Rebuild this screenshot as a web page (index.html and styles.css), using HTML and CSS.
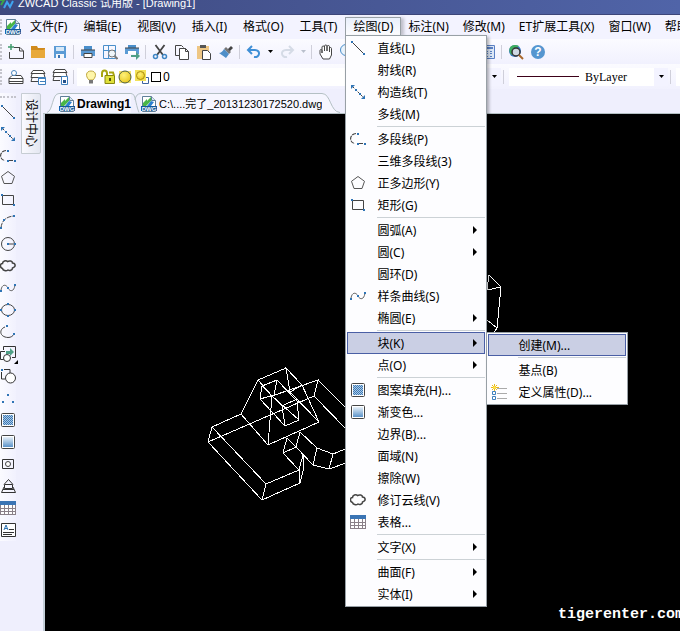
FILE: index.html
```
<!DOCTYPE html>
<html lang="zh-CN">
<head>
    <meta charset="UTF-8">
    <meta name="viewport" content="width=device-width, initial-scale=1.0">
    <title>ZWCAD Classic 试用版 - [Drawing1]</title>
    <link rel="stylesheet" href="styles.css">
</head>
<body>

    <!-- shared icons -->
    <svg class="defs" aria-hidden="true">
        <defs>
            <linearGradient id="g-blue" x1="0" y1="0" x2="0" y2="1">
                <stop offset="0" stop-color="#e8f1f9"/><stop offset="1" stop-color="#5b93c9"/>
            </linearGradient>
            <pattern id="p-check" width="2" height="2" patternUnits="userSpaceOnUse">
                <rect width="2" height="2" fill="#a9cbe8"/><path d="M0 0h1v1H0zM1 1h1v1H1z" fill="#3f78b4"/>
            </pattern>
            <radialGradient id="g-sun" cx=".4" cy=".35" r=".7">
                <stop offset="0" stop-color="#fff27a"/><stop offset="1" stop-color="#e8c61c"/>
            </radialGradient>
        </defs>
        <symbol id="i-dwg" viewBox="0 0 16 16">
            <path d="M1.500.500h9l4 4v11h-13z" fill="#fff" stroke="#5f7f99"/>
            <path d="M10.500.500v4h4" fill="#d8e6f0" stroke="#5f7f99"/>
            <path d="M2 7l4-4v2l4-4v4L5 10H2z" fill="#49b648"/>
            <path d="M6 10l4-5 3 1-3 4z" fill="#2c7fd0"/>
            <rect y="10" width="16" height="5" fill="#14599b"/>
            <text x="8" y="15" text-anchor="middle" class="tiny">DWG</text>
        </symbol>
        <symbol id="i-line" viewBox="0 0 16 16">
            <path d="M2 2l12 12" stroke="#444"/>
            <path d="M1 1h2v2H1zM13 13h2v2h-2z" fill="#2f74b5"/>
        </symbol>
        <symbol id="i-xline" viewBox="0 0 16 16">
            <path d="M2 2l12 12" stroke="#444" stroke-dasharray="3 1"/>
            <path d="M1 1h4L1 5zM15 15h-4l4-4zM5 5h2v2H5zM9 9h2v2H9z" fill="#2f74b5"/>
        </symbol>
        <symbol id="i-pline" viewBox="0 0 16 16">
            <path d="M6 2.500C-1 3-1 12 5 12.500M9 12.500h5" fill="none" stroke="#444" stroke-width="1.2" stroke-dasharray="4 1"/>
            <path d="M7 2h2v2H7zM7 12h2v2H7zM14 12h2v2h-2z" fill="#2f74b5"/>
        </symbol>
        <symbol id="i-polygon" viewBox="0 0 16 16">
            <path d="M8 1.500l6.500 4.800-2.500 7.200H4L1.500 6.300z" fill="none" stroke="#555"/>
        </symbol>
        <symbol id="i-rect" viewBox="0 0 16 16">
            <path d="M2.500 3.500h11v9h-11z" fill="none" stroke="#444"/>
            <path d="M1 2h2v2H1zM13 12h2v2h-2z" fill="#2f74b5"/>
        </symbol>
        <symbol id="i-arc" viewBox="0 0 16 16">
            <path d="M1 14Q2 3 14 2" fill="none" stroke="#444" stroke-dasharray="5 1"/>
            <path d="M0 13h2v2H0zM3 5h2v2H3zM13 1h2v2h-2z" fill="#2f74b5"/>
        </symbol>
        <symbol id="i-circle" viewBox="0 0 16 16">
            <circle cx="8" cy="8" r="6.500" fill="none" stroke="#444"/>
            <path d="M8 8h6" stroke="#444"/><path d="M7 7h2v2H7zM14 7h2v2h-2z" fill="#2f74b5"/>
        </symbol>
        <symbol id="i-cloud" viewBox="0 0 16 16">
            <path d="M2.500 10.500C-.5 9.500 0 5.500 2.500 5.500c0-2.500 3.500-3.500 5-2 2-1.200 5-.5 5 1.500 3.500.5 3.500 4 0 5 0 2.500-3 3-4.500 2-2 1.500-5 .5-5.500-1.500z" fill="none" stroke="#444" stroke-width="1.5"/>
        </symbol>
        <symbol id="i-spline" viewBox="0 0 16 16">
            <path d="M1 10C2 4 6 4 8 8s6 4 7-3" fill="none" stroke="#666"/>
            <path d="M0 10h2v2H0zM7 7h2v2H7zM14 4h2v2h-2z" fill="#2f74b5"/>
        </symbol>
        <symbol id="i-ellipse" viewBox="0 0 16 16">
            <ellipse cx="8" cy="8" rx="6.500" ry="5.500" fill="none" stroke="#444"/>
            <path d="M7 1h2v2H7zM7 13h2v2H7zM0 7h2v2H0zM14 7h2v2h-2z" fill="#2f74b5"/>
        </symbol>
        <symbol id="i-earc" viewBox="0 0 16 16">
            <path d="M5 3C-1 5-1 13 8 13.500c3 0 5-1.500 6-3.500" fill="none" stroke="#444"/>
            <path d="M6 1h2v2H6zM13 9h2v2h-2z" fill="#2f74b5"/>
        </symbol>
        <symbol id="i-insert" viewBox="0 0 16 16">
            <path d="M3.500 4V.500h12v11H12M5 5.500H.5v8H4" fill="none" stroke="#333"/>
            <path d="M6 5h4V2l4 4-4 4V8H6z" fill="#4f9f86"/><circle cx="7" cy="12" r="3.500" fill="#fff" stroke="#333"/>
        </symbol>
        <symbol id="i-block" viewBox="0 0 16 16">
            <path d="M4 1.500h6V5M1.500 4v7H5" fill="none" stroke="#333"/><path d="M1 1h2v2H1z" fill="#2f74b5"/>
            <circle cx="10.500" cy="10" r="5" fill="#fff" stroke="#333"/>
        </symbol>
        <symbol id="i-points" viewBox="0 0 16 16">
            <path d="M7 4h2v2H7zM2 11h2v2H2zM12 11h2v2h-2z" fill="#2f74b5"/>
        </symbol>
        <symbol id="i-hatch" viewBox="0 0 16 16">
            <rect x="1.500" y="1.500" width="13" height="13" rx="1" fill="#fff" stroke="#444"/>
            <rect x="3" y="3" width="10" height="10" fill="url(#p-check)"/>
        </symbol>
        <symbol id="i-gradient" viewBox="0 0 16 16">
            <rect x="1.500" y="1.500" width="13" height="13" rx="1" fill="#fff" stroke="#444"/>
            <rect x="3" y="3" width="10" height="10" fill="url(#g-blue)"/>
        </symbol>
        <symbol id="i-region" viewBox="0 0 16 16">
            <path d="M2.500 3.500h11v9h-11z" fill="none" stroke="#333"/><circle cx="8" cy="8" r="2.500" fill="#fff" stroke="#444"/>
        </symbol>
        <symbol id="i-wipe" viewBox="0 0 16 16">
            <path d="M4 6.500l4.500-5 4.500 5M4.500 6.500h8v4h-8zM4 9l-2.500 5.500h14L13 9M3 11.500h11" fill="none" stroke="#333"/>
        </symbol>
        <symbol id="i-table" viewBox="0 0 16 16">
            <path d="M0 1h16v14H0z" fill="#8a8088"/><path d="M0 1h16v4H0z" fill="#3a74b4"/>
            <path d="M1 5h3v3H1zM5 5h3v3H5zM9 5h3v3H9zM13 5h2v3h-2zM1 9h3v2H1zM5 9h3v2H5zM9 9h3v2H9zM13 9h2v2h-2zM1 12h3v2H1zM5 12h3v2H5zM9 12h3v2H9zM13 12h2v2h-2z" fill="#fff"/>
        </symbol>
        <symbol id="i-mtext" viewBox="0 0 16 16">
            <path d="M1.500 1.500h14v13h-14z" fill="#fff" stroke="#333"/>
            <path d="M4 8l2-5 2 5M4.500 6.500h3" fill="none" stroke="#2f74b5"/><path d="M9 7.500h5M3 10.500h11M3 12.500h9" stroke="#333"/>
        </symbol>
        <symbol id="i-attdef" viewBox="0 0 16 16">
            <path d="M3.500 0v8M0 3.500h8M1 1l5 5M6 1L1 6" stroke="#e9b91c"/><circle cx="3.500" cy="3.500" r="1.500" fill="#ffe34a"/>
            <path d="M1.500 7.500h3v3h-3zM1.500 12.500h3v3h-3z" fill="#fff" stroke="#3f80bd"/>
            <path d="M6 4.500h10M6 9.500h10M6 14.500h10" stroke="#aaa"/>
        </symbol>
        <symbol id="i-arrow" viewBox="0 0 4 8"><path d="M0 0l4 4-4 4z" fill="#000"/></symbol>
        <symbol id="i-down" viewBox="0 0 5 3"><path d="M0 0h5L2.500 3z" fill="currentColor"/></symbol>
    </svg>

    <header class="titlebar">
        <svg class="icon" viewBox="0 0 16 16"><path d="M0 4h4l-3 5" fill="none" stroke="#3da54a" stroke-width="2"/><path d="M4 12l3-6 3 5 3-6" fill="none" stroke="#3fa4f0" stroke-width="2"/></svg>
        <span>ZWCAD Classic 试用版 - [Drawing1]</span>
    </header>

    <nav class="menubar">
        <span class="grip"></span>
        <svg class="icon logo"><use href="#i-dwg"/></svg>
        <ul class="menus">
            <li><button>文件(F)</button></li>
            <li><button>编辑(E)</button></li>
            <li><button>视图(V)</button></li>
            <li><button>插入(I)</button></li>
            <li><button>格式(O)</button></li>
            <li><button>工具(T)</button></li>
            <li class="open">
                <button aria-expanded="true">绘图(D)</button>
                <ul class="dropdown">
                    <li><button><svg class="icon"><use href="#i-line"/></svg><span>直线(L)</span></button></li>
                    <li><button><i class="icon"></i><span>射线(R)</span></button></li>
                    <li><button><svg class="icon"><use href="#i-xline"/></svg><span>构造线(T)</span></button></li>
                    <li><button><i class="icon"></i><span>多线(M)</span></button></li>
                    <li class="line"></li>
                    <li><button><svg class="icon"><use href="#i-pline"/></svg><span>多段线(P)</span></button></li>
                    <li><button><i class="icon"></i><span>三维多段线(3)</span></button></li>
                    <li><button><svg class="icon"><use href="#i-polygon"/></svg><span>正多边形(Y)</span></button></li>
                    <li><button><svg class="icon"><use href="#i-rect"/></svg><span>矩形(G)</span></button></li>
                    <li class="line"></li>
                    <li><button><i class="icon"></i><span>圆弧(A)</span><svg class="more"><use href="#i-arrow"/></svg></button></li>
                    <li><button><i class="icon"></i><span>圆(C)</span><svg class="more"><use href="#i-arrow"/></svg></button></li>
                    <li><button><i class="icon"></i><span>圆环(D)</span></button></li>
                    <li><button><svg class="icon"><use href="#i-spline"/></svg><span>样条曲线(S)</span></button></li>
                    <li><button><i class="icon"></i><span>椭圆(E)</span><svg class="more"><use href="#i-arrow"/></svg></button></li>
                    <li class="line"></li>
                    <li>
                        <button class="active" aria-expanded="true"><i class="icon"></i><span>块(K)</span><svg class="more"><use href="#i-arrow"/></svg></button>
                        <ul class="dropdown submenu">
                            <li><button class="active"><i class="icon"></i><span>创建(M)...</span></button></li>
                            <li class="line"></li>
                            <li><button><i class="icon"></i><span>基点(B)</span></button></li>
                            <li><button><svg class="icon"><use href="#i-attdef"/></svg><span>定义属性(D)...</span></button></li>
                        </ul>
                    </li>
                    <li><button><i class="icon"></i><span>点(O)</span><svg class="more"><use href="#i-arrow"/></svg></button></li>
                    <li class="line"></li>
                    <li><button><svg class="icon"><use href="#i-hatch"/></svg><span>图案填充(H)...</span></button></li>
                    <li><button><svg class="icon"><use href="#i-gradient"/></svg><span>渐变色...</span></button></li>
                    <li><button><i class="icon"></i><span>边界(B)...</span></button></li>
                    <li><button><i class="icon"></i><span>面域(N)</span></button></li>
                    <li><button><i class="icon"></i><span>擦除(W)</span></button></li>
                    <li><button><svg class="icon"><use href="#i-cloud"/></svg><span>修订云线(V)</span></button></li>
                    <li><button><svg class="icon"><use href="#i-table"/></svg><span>表格...</span></button></li>
                    <li class="line"></li>
                    <li><button><i class="icon"></i><span>文字(X)</span><svg class="more"><use href="#i-arrow"/></svg></button></li>
                    <li class="line"></li>
                    <li><button><i class="icon"></i><span>曲面(F)</span><svg class="more"><use href="#i-arrow"/></svg></button></li>
                    <li><button><i class="icon"></i><span>实体(I)</span><svg class="more"><use href="#i-arrow"/></svg></button></li>
                </ul>
            </li>
            <li><button>标注(N)</button></li>
            <li><button>修改(M)</button></li>
            <li><button>ET扩展工具(X)</button></li>
            <li><button>窗口(W)</button></li>
            <li><button>帮助(H)</button></li>
        </ul>
    </nav>

    <div class="toolbar standard">
        <span class="grip"></span>
        <button aria-label="新建"><svg class="icon" viewBox="0 0 16 16"><path d="M6 3.500h6l3.500 3.500v7.500h-14V8" fill="none" stroke="#444"/><path d="M11.500 3.500V7h4" fill="none" stroke="#444"/><path d="M3 0v6M0 3h6" stroke="#3f9a6c" stroke-width="1.500"/></svg></button>
        <button aria-label="打开"><svg class="icon" viewBox="0 0 16 16"><path d="M1 3V2h6l1 2h7v10H1z" fill="#d08a1c"/><path d="M1 6h12l2-1v9H1z" fill="#e8a93a"/></svg></button>
        <button aria-label="保存"><svg class="icon" viewBox="0 0 16 16"><path d="M2 2h12v12H2z" fill="#5b9bd5"/><path d="M4 3h8v4H4z" fill="#d6e8f7"/><path d="M4 10h8v4H4z" fill="#f6f8fb"/><path d="M6 11h2v3H6z" fill="#3a74b4"/></svg></button>
        <span class="sep"></span>
        <button aria-label="打印"><svg class="icon" viewBox="0 0 16 16"><path d="M4 2h8v4H4z" fill="#4a8fcb"/><path d="M1 6h14v6H1z" fill="#5b9bd5"/><path d="M4 9.500h8v4H4z" fill="#fff" stroke="#444"/><path d="M1 6h14" stroke="#444"/></svg></button>
        <button aria-label="打印预览"><svg class="icon" viewBox="0 0 16 16"><path d="M1.500 1.500h12v13h-12zM1.500 6.500h12M6.500 1.500v13" fill="none" stroke="#4a8fcb"/><circle cx="10" cy="9.500" r="3.500" fill="#eef5fb" stroke="#777"/><path d="M12.500 12l3 3" stroke="#777" stroke-width="2"/></svg></button>
        <button aria-label="发布"><svg class="icon" viewBox="0 0 16 16"><path d="M4 1h8v3H4z" fill="#4a8fcb"/><path d="M1 4h14v6H1z" fill="#5b9bd5"/><path d="M4 7h8v3H4z" fill="#fff"/><path d="M1 4h14" stroke="#444"/><path d="M7 11h5V8l4 4-4 4v-3H7z" fill="#4f9f86"/></svg></button>
        <span class="sep"></span>
        <button aria-label="剪切"><svg class="icon" viewBox="0 0 16 16"><path d="M3.500 1L11 11M12.500 1L5 11" stroke="#444" stroke-width="1.800"/><circle cx="3.500" cy="12.500" r="2" fill="none" stroke="#3f86c4" stroke-width="1.500"/><circle cx="12.500" cy="12.500" r="2" fill="none" stroke="#3f86c4" stroke-width="1.500"/></svg></button>
        <button aria-label="复制"><svg class="icon" viewBox="0 0 16 16"><path d="M5 11.500H1.500v-10h6l2 2" fill="none" stroke="#444"/><path d="M5.500 4.500h6l3 3v8h-9z" fill="#fff" stroke="#444"/><path d="M11.500 4.500v3h3" fill="none" stroke="#444"/></svg></button>
        <button aria-label="粘贴"><svg class="icon" viewBox="0 0 16 16"><path d="M1 2h12v13H1z" fill="#eec684"/><path d="M4 1h6v3H4z" fill="#555"/><path d="M6.500 6.500h5l3 3v6h-8z" fill="#fff" stroke="#444"/></svg></button>
        <button aria-label="特性匹配"><svg class="icon" viewBox="0 0 16 16"><path d="M9 6l4-4 2 2-4 4z" fill="#444"/><path d="M8 3l5 5-2 2-5-5z" fill="#777"/><path d="M6 5l5 5-3 4-7-5c2 0 4-2 5-4z" fill="#4f8fc9"/></svg></button>
        <span class="sep"></span>
        <button aria-label="放弃"><svg class="icon" viewBox="0 0 16 16"><path d="M6 2L2 6l4 4M2 6h7c6 0 5 8-1 7" fill="none" stroke="#3f8fd6" stroke-width="2"/></svg></button>
        <button class="drop" aria-label="放弃列表"><svg><use href="#i-down"/></svg></button>
        <button aria-label="重做" disabled><svg class="icon" viewBox="0 0 16 16"><path d="M10 2l4 4-4 4M14 6H7c-6 0-5 8 1 7" fill="none" stroke="#d5dbe6" stroke-width="2"/></svg></button>
        <button class="drop" aria-label="重做列表" disabled><svg><use href="#i-down"/></svg></button>
        <span class="sep"></span>
        <button aria-label="平移"><svg class="icon" viewBox="0 0 16 16"><path d="M5 15l-3-5V6.500c0-1.300 2-1.300 2 0V9 3c0-1.300 2.500-1.300 2.500 0v4-5c0-1.300 2.500-1.300 2.500 0v5-4.500c0-1.300 2.500-1.300 2.500 0V8 4.500c0-1.300 2-1.300 2 0V11l-2 4z" fill="#fff" stroke="#444"/></svg></button>
        <button aria-label="缩放"><svg class="icon" viewBox="0 0 16 16"><circle cx="6" cy="6" r="5.500" fill="#eaf3fb" stroke="#4a8fcb"/></svg></button>
        <span class="spacer"></span>
        <button aria-label="计算器"><svg class="icon" viewBox="0 0 16 16"><path d="M4.500 1.500h10v13h-10z" fill="#dce7f6" stroke="#5a80c4"/><path d="M6 3h7v2H6zM6 7h2v1H6zM10 7h2v1h-2zM6 9h2v1H6zM10 9h2v1h-2zM6 12h2v1H6zM10 12h2v1h-2z" fill="#5a80c4"/></svg></button>
        <span class="sep"></span>
        <button aria-label="搜索"><svg class="icon" viewBox="0 0 16 16"><circle cx="7" cy="7" r="6" fill="#3a78c8"/><path d="M1.500 5C2 1 8 0 11 2L6 6l-2 5C2 10 1 7 1.500 5z" fill="#3fae62"/><circle cx="8" cy="8" r="4" fill="#cfd8e4" stroke="#333" stroke-width="1.500"/><path d="M11 11l4 4" stroke="#a8662a" stroke-width="2"/></svg></button>
        <button aria-label="帮助"><svg class="icon" viewBox="0 0 16 16"><circle cx="8" cy="8" r="7" fill="#5596d0"/><text x="8" y="12" text-anchor="middle" class="mark">?</text></svg></button>
    </div>

    <div class="toolbar layers">
        <span class="grip"></span>
        <button aria-label="图层特性"><svg class="icon" viewBox="0 0 16 16"><path d="M4 6.500h9l2 3H1zM1 12.500h14M1 9.500v5h14v-5" fill="#fff" stroke="#444"/><circle cx="6" cy="4" r="2.500" fill="#fff" stroke="#4a86bd"/></svg></button>
        <button aria-label="图层状态"><svg class="icon" viewBox="0 0 16 16"><path d="M3 1.500h10l2 3H1zM2 5l-1 3.500h14L14 5M2 9l-1 3.500h7" fill="#fff" stroke="#444"/><path d="M8.500 8.500h7v7h-7z" fill="#fff" stroke="#3f80bd"/><path d="M8 9.500h8M10 12.500h5" stroke="#3f80bd"/></svg></button>
        <button aria-label="上一图层"><svg class="icon" viewBox="0 0 16 16"><path d="M3 .500h10l2 3H1zM2 4l-1 3.500h14L14 4M2 8l-1 3.500h7" fill="#fff" stroke="#444"/><path d="M9.500 7.500h6v8h-6z" fill="#fff" stroke="#3f80bd"/><path d="M11 11h3v3h-3z" fill="#24518c"/></svg></button>
        <span class="sep"></span>
        <div class="field layer">
            <svg class="icon" viewBox="0 0 16 16"><path d="M6 11C2 7 3 2 8 2s6 5 2 9z" fill="#fff6a8" stroke="#c0a840"/><path d="M6 11h4v3.500H6z" fill="#777"/></svg>
            <svg class="icon" viewBox="0 0 16 16"><path d="M2 8V4.500c0-4 5-4 5 0V7" fill="none" stroke="#a8a510" stroke-width="2"/><path d="M5 6.500h9.500v8H5z" fill="#dfe03a" stroke="#888610"/><path d="M9 3.500h4l1 3" fill="none" stroke="#a8a510" stroke-width="2"/><path d="M9 9h2v3H9z" fill="#555310"/></svg>
            <svg class="icon" viewBox="0 0 16 16"><path d="M2 2h12v12H2z" fill="#f7e870"/><circle cx="8" cy="8" r="6" fill="url(#g-sun)" stroke="#4d5f4a"/></svg>
            <svg class="icon" viewBox="0 0 16 16"><path d="M8.500 8.500h6v6h-6z" fill="#fff" stroke="#3f63a0"/><path d="M1 1h11v11H1z" fill="#f3e25a"/><circle cx="6.500" cy="6.500" r="4" fill="url(#g-sun)" stroke="#a98e14"/></svg>
            <span class="swatch"></span>
            <select aria-label="图层"><option>0</option></select>
        </div>
        <div class="field color">
            <select aria-label="颜色"><option></option></select>
            <span class="pick"><svg><use href="#i-down"/></svg></span>
        </div>
        <span class="sep"></span>
        <div class="field linetype">
            <span class="sample"></span>
            <select aria-label="线型"><option>ByLayer</option></select>
            <span class="pick"><svg><use href="#i-down"/></svg></span>
        </div>
        <span class="sep"></span>
        <div class="field weight"></div>
    </div>

    <main class="workspace">
        <aside class="dock">
            <div class="draw-tools">
                <span class="grip-h"></span>
                <button aria-label="直线"><svg class="icon"><use href="#i-line"/></svg></button>
                <button aria-label="构造线"><svg class="icon"><use href="#i-xline"/></svg></button>
                <button aria-label="多段线"><svg class="icon"><use href="#i-pline"/></svg></button>
                <button aria-label="正多边形"><svg class="icon"><use href="#i-polygon"/></svg></button>
                <button aria-label="矩形"><svg class="icon"><use href="#i-rect"/></svg></button>
                <button aria-label="圆弧"><svg class="icon"><use href="#i-arc"/></svg></button>
                <button aria-label="圆"><svg class="icon"><use href="#i-circle"/></svg></button>
                <button aria-label="修订云线"><svg class="icon"><use href="#i-cloud"/></svg></button>
                <button aria-label="样条曲线"><svg class="icon"><use href="#i-spline"/></svg></button>
                <button aria-label="椭圆"><svg class="icon"><use href="#i-ellipse"/></svg></button>
                <button aria-label="椭圆弧"><svg class="icon"><use href="#i-earc"/></svg></button>
                <button aria-label="插入块" class="flyout"><svg class="icon"><use href="#i-insert"/></svg></button>
                <button aria-label="创建块"><svg class="icon"><use href="#i-block"/></svg></button>
                <button aria-label="点"><svg class="icon"><use href="#i-points"/></svg></button>
                <button aria-label="图案填充"><svg class="icon"><use href="#i-hatch"/></svg></button>
                <button aria-label="渐变色"><svg class="icon"><use href="#i-gradient"/></svg></button>
                <button aria-label="面域"><svg class="icon"><use href="#i-region"/></svg></button>
                <button aria-label="擦除"><svg class="icon"><use href="#i-wipe"/></svg></button>
                <button aria-label="表格"><svg class="icon"><use href="#i-table"/></svg></button>
                <button aria-label="多行文字"><svg class="icon"><use href="#i-mtext"/></svg></button>
            </div>
            <button class="side-tab">设计中心</button>
        </aside>

        <section class="document">
            <div class="tabs">
                <svg class="edge left" viewBox="0 0 12 20"><path d="M0 20C6 18 5 0 12 .500V20z" class="fill"/><path d="M0 19.500C6 18 5 .500 12 .500" class="stroke"/></svg>
                <button class="tab current"><svg class="icon"><use href="#i-dwg"/></svg>Drawing1</button>
                <svg class="edge join" viewBox="0 0 10 20"><path d="M0 .500C5 .500 4 10 8 19.500" class="stroke"/><path d="M4 7Q5 .500 10 .500" class="stroke"/></svg>
                <button class="tab"><svg class="icon"><use href="#i-dwg"/></svg>C:\....完了_20131230172520.dwg</button>
                <svg class="edge right" viewBox="0 0 18 20"><path d="M0 0C9 0 8 19 18 19.500V20H0z" class="fill"/><path d="M0 .500C9 .500 8 19 18 19.500" class="stroke"/></svg>
            </div>
            <div class="canvas">
                <svg class="drawing" width="635" height="517" viewBox="45 114 635 517">
                    <!-- outer body -->
                    <path d="M286 368L258 380L241 414L212 427L208 442L262 500L300 483L304 467L303 455L299 470L266 484L262 500M212 427L266 484M299 470L300 483"/>
                    <path d="M241 414L268 445L319 422L302 385L286 368L290 392L319 422M268 445L272 396L258 380M208 442L314 396L318 380L272 396"/>
                    <!-- inner box -->
                    <path d="M262 386L277 380L297 401L299 420L285 426L260 399L262 386L282 406L285 426M277 380L274 395L260 399M282 406L297 399M272 396L299 420M290 392L302 385"/>
                    <!-- right arm -->
                    <path d="M318 380L346 408M314 396L346 429"/>
                    <path d="M300 432L296 447L283 453L299 470M287 438L283 453M287 438L296 447L313 465L317 448L300 432M317 448L333 454L329 469L313 465M333 454L360 443M329 469L360 458"/>
                    <!-- far corner -->
                    <path d="M487 290L489 275L501 287L487 290M501 287L497 328L487 320M497 328L494 333"/>
                </svg>
                <span class="watermark">tigerenter.com</span>
            </div>
        </section>
    </main>

</body>
</html>
```
FILE: styles.css
```
* {
    box-sizing: border-box;
}

body {
    margin: 0;
    min-height: 100vh;
    display: flex;
    flex-direction: column;
    overflow: hidden;
    background: #efeffd;
    color: #000;
    font-family: "Noto Sans", "Noto Sans CJK SC", sans-serif;
    font-size: 12px;
    line-height: 16px;
}

ul {
    list-style: none;
    margin: 0;
    padding: 0;
}

button,
select {
    border: 0;
    padding: 0;
    margin: 0;
    background: none;
    font: inherit;
    color: inherit;
    white-space: nowrap;
}

select {
    appearance: none;
}

.defs {
    position: absolute;
    width: 0;
    height: 0;
}

.icon {
    width: 16px;
    height: 16px;
    flex: none;
    display: block;
}

.tiny {
    font: bold 6px "Liberation Sans", sans-serif;
    fill: #fff;
}

.mark {
    font: bold 12px "Liberation Sans", sans-serif;
    fill: #fff;
}

/* title */
.titlebar {
    height: 15px;
    flex: none;
    display: flex;
    align-items: flex-end;
    gap: 2px;
    padding-bottom: 2px;
    overflow: hidden;
    background: linear-gradient(90deg, #3e497f, #5064a8);
    border-bottom: 1px solid #3c4579;
    color: #fff;
    font-family: "Liberation Sans", "Noto Sans CJK SC", sans-serif;
    font-size: 11px;
    line-height: 18px;
}

/* menu bar */
.menubar {
    height: 24px;
    flex: none;
    display: flex;
    align-items: center;
    background: #f3f3ff;
}

.grip {
    width: 5px;
    height: 16px;
    flex: none;
    border-left: 2px dotted #c4c4cc;
}

.menus {
    display: flex;
    height: 20px;
    margin-left: 1px;
}

.menus > li {
    position: relative;
}

.menus > li > button {
    height: 18px;
    padding: 2px 8px 0;
}

.menus > li.open > button {
    border: 1px solid #98a0a6;
    border-bottom: 0;
    padding: 1px 7px 0;
    background: linear-gradient(#e9effb, #fdfdff);
    box-shadow: 3px 1px 3px #c0c0cc;
}

.menus > li.open ~ li > button {
    padding: 2px 7px 0;
}

.dropdown {
    position: absolute;
    top: 18px;
    left: 0;
    z-index: 10;
    width: 142px;
    padding: 1px;
    background: #fdfdff;
    border: 1px solid #98a0a6;
    box-shadow: 2px 2px 3px rgba(0, 0, 0, 0.3);
}

.dropdown li {
    position: relative;
}

.dropdown button {
    display: flex;
    align-items: center;
    width: 100%;
    height: 22px;
    padding: 0 7px 0 2px;
    border: 1px solid transparent;
}

.dropdown button.active {
    background: #cacfe4;
    border-color: #4a5fa5;
}

.dropdown span {
    margin-left: 11px;
    padding-top: 2px;
}

.dropdown .line {
    height: 1px;
    margin: 1px 0 1px 30px;
    background: #ccd2d6;
}

.submenu {
    top: 0;
    left: 100%;
    margin-left: 1px;
}

.more {
    width: 4px;
    height: 8px;
    margin-left: auto;
}

/* toolbars */
.toolbar {
    height: 25px;
    flex: none;
    display: flex;
    align-items: center;
    background: linear-gradient(#fbfbff, #f1f1fe);
}

.toolbar button {
    width: 22px;
    height: 22px;
    flex: none;
    display: flex;
    align-items: center;
    justify-content: center;
}

.toolbar .drop {
    width: 11px;
}

.toolbar .drop svg,
.pick svg {
    width: 5px;
    height: 3px;
}

.toolbar button:disabled {
    color: #b9bfcc;
}

.sep {
    width: 1px;
    height: 14px;
    margin: 0 3px 0 2px;
    flex: none;
    background: #cfcfda;
}

.spacer {
    width: 118px;
    flex: none;
}

.field {
    height: 18px;
    display: flex;
    align-items: center;
    background: #fff;
}

.field.layer {
    width: 281px;
    flex: none;
    gap: 1px;
    padding-left: 6px;
}

.swatch {
    width: 10px;
    height: 10px;
    margin-right: 1px;
    border: 1px solid #000;
}

.field.layer select {
    flex: 1;
}

.field.color {
    width: 143px;
    flex: none;
}

.field.color select {
    flex: 1;
}

.pick {
    width: 14px;
    height: 18px;
    display: flex;
    align-items: center;
    justify-content: center;
    background: #f3f3ff;
}

.field.linetype {
    width: 159px;
    margin-left: 2px;
    flex: none;
    padding-left: 8px;
}

.sample {
    width: 62px;
    height: 1px;
    margin-right: 6px;
    background: #3c0018;
}

.field.linetype select {
    flex: 1;
    font-family: "Liberation Serif", serif;
}

.field.weight {
    flex: 1;
    margin-left: 2px;
}

/* left dock */
.workspace {
    flex: 1;
    display: flex;
}

.dock {
    width: 43px;
    flex: none;
    display: flex;
    align-items: flex-start;
    gap: 5px;
    padding-top: 4px;
}

.draw-tools {
    width: 16px;
    display: flex;
    flex-direction: column;
    padding-top: 3px;
    background: linear-gradient(90deg, #fbfbff, #f1f1fe);
}

.grip-h {
    height: 5px;
    border-top: 2px dotted #c4c4cc;
}

.draw-tools button {
    height: 22px;
    position: relative;
}

.flyout::after {
    content: "";
    position: absolute;
    right: -2px;
    bottom: 1px;
    border: 2px solid;
    border-color: transparent #000 #000 transparent;
}

.side-tab {
    width: 20px;
    height: 61px;
    writing-mode: vertical-rl;
    text-orientation: sideways;
    background: linear-gradient(90deg, #fafaff, #e4e7f1);
    border: 1px solid #c6cdd3;
    border-radius: 0 2px 2px 0;
    text-align: center;
}

/* document */
.document {
    flex: 1;
    min-width: 0;
    display: flex;
    flex-direction: column;
}

.tabs {
    height: 25px;
    flex: none;
    display: flex;
    align-items: flex-end;
    padding-left: 4px;
    border-bottom: 1px solid #b4c0c4;
}

.tab {
    height: 20px;
    display: flex;
    align-items: center;
    gap: 2px;
    background: #f6f6ff;
    border-top: 1px solid #b4c0c4;
    font-family: "Liberation Sans", "Noto Sans CJK SC", sans-serif;
    font-size: 11px;
}

.tab.current {
    font-size: 12px;
    font-weight: bold;
}

.edge {
    height: 20px;
    flex: none;
}

.edge.left {
    width: 12px;
}

.edge.join {
    width: 10px;
}

.edge.right {
    width: 18px;
}

.edge .fill {
    fill: #f6f6ff;
}

.edge .stroke {
    fill: none;
    stroke: #b4c0c4;
}

.canvas {
    position: relative;
    flex: 1;
    overflow: hidden;
    background: #000;
    border-left: 2px solid #c3ced8;
}

.drawing {
    display: block;
}

.drawing path {
    fill: none;
    stroke: #fff;
    shape-rendering: crispEdges;
}

.watermark {
    position: absolute;
    right: -4px;
    bottom: 8px;
    color: #fff;
    font: bold 15px "Liberation Mono", monospace;
}
```
